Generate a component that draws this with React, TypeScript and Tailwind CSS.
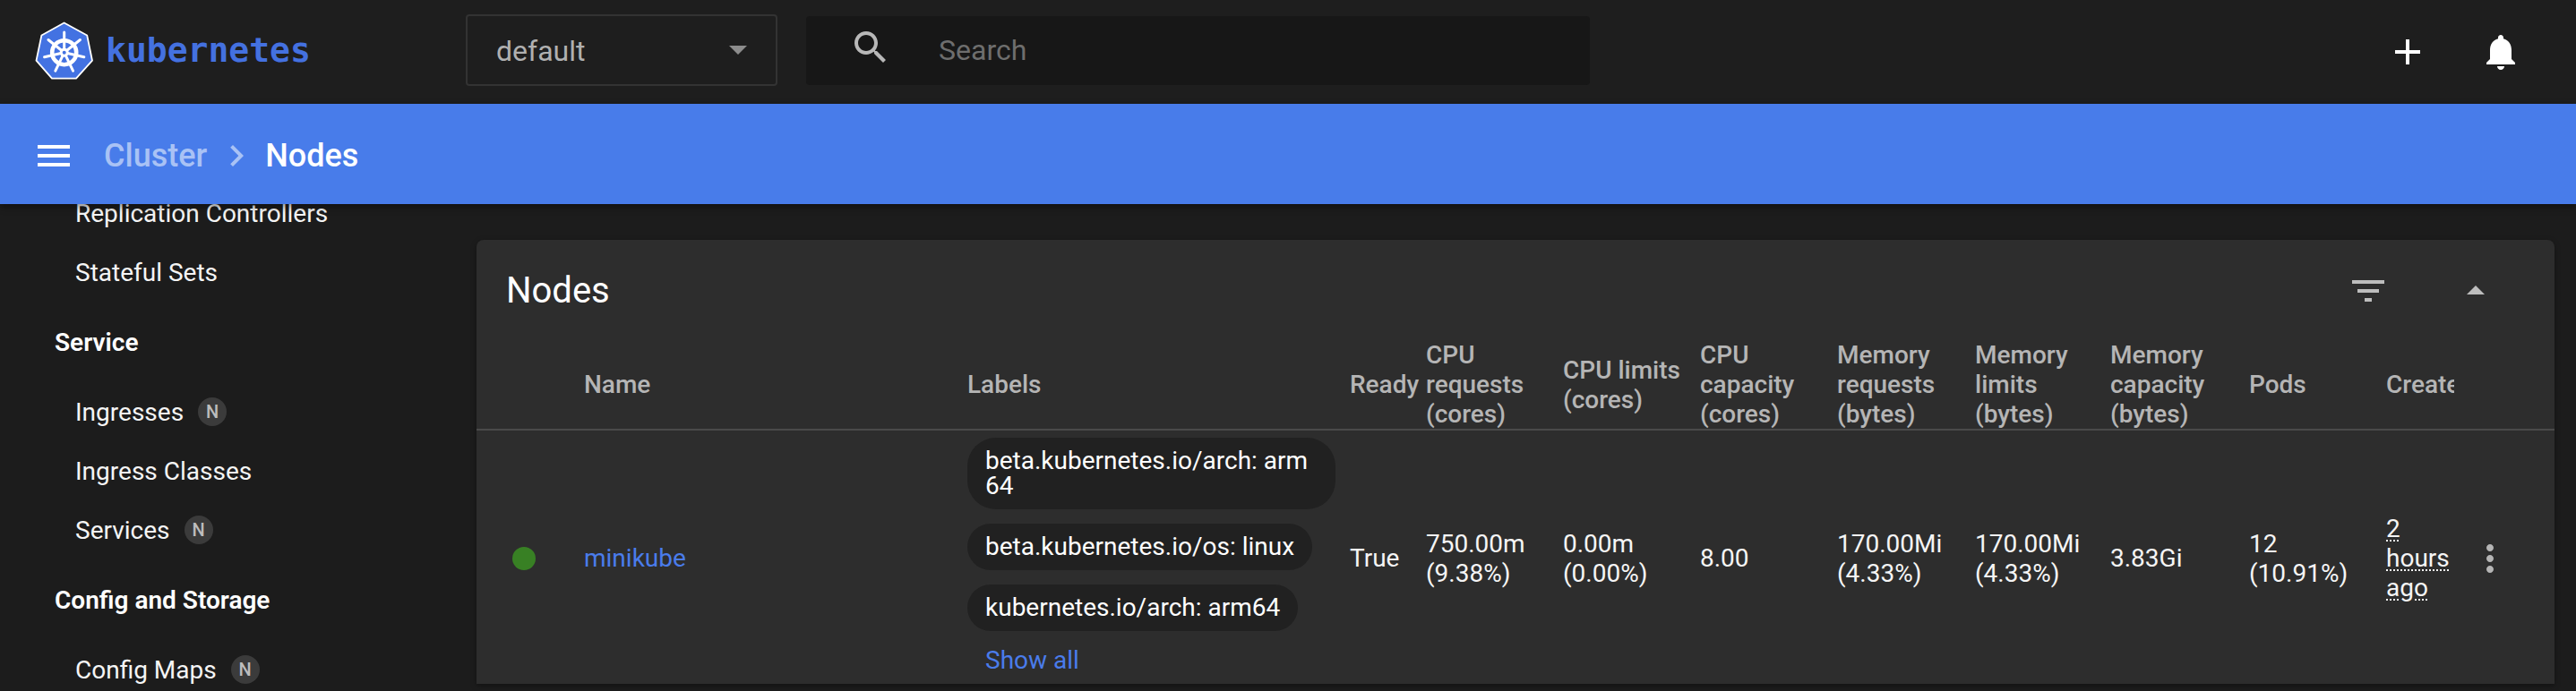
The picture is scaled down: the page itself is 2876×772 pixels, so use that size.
const GRID = "grid grid-cols-[120px_428px_427px_85px_153px_153px_153px_154px_151px_155px_153px_76px_1fr]";

function Icon({ d, className }: { d: string; className: string }) {
  return (
    <svg viewBox="0 0 24 24" className={className} fill="currentColor">
      <path d={d} />
    </svg>
  );
}

function Logo() {
  const spokes = [0, 51.43, 102.86, 154.29, 205.71, 257.14, 308.57];
  return (
    <svg width="65" height="65" viewBox="-1 -1 65 65" className="shrink-0">
      <path
        d="M31.6 0.5 L57.2 14.5 L63 42.7 L45 62.7 L18 62.7 L0.5 42.7 L6.4 14.5 Z"
        fill="#4372e2"
        stroke="#ffffff"
        strokeWidth="1.8"
        strokeLinejoin="round"
      />
      <g stroke="#ffffff" fill="none">
        <circle cx="31.7" cy="33.7" r="13.5" strokeWidth="4.6" />
        {spokes.map((a) => (
          <g key={a} transform={`rotate(${a} 31.7 33.7)`}>
            <line x1="31.7" y1="31" x2="31.7" y2="11" strokeWidth="3" strokeLinecap="round" />
          </g>
        ))}
      </g>
      <circle cx="31.7" cy="33.7" r="5" fill="#ffffff" />
      <circle cx="31.7" cy="33.7" r="2" fill="#4372e2" />
    </svg>
  );
}

function SideItem({ label, badge }: { label: string; badge?: boolean }) {
  return (
    <div className="h-[66px] pl-[84px] flex items-center gap-[16px] text-[#f5f5f5]">
      <span>{label}</span>
      {badge && (
        <span className="w-[32px] h-[32px] rounded-full bg-[#3b3b3b] text-[#bdbdbd] text-[20px] font-medium flex items-center justify-center">
          N
        </span>
      )}
    </div>
  );
}

function SideHead({ label }: { label: string }) {
  return <div className="h-[90px] pl-[61px] flex items-center font-semibold text-white">{label}</div>;
}

function Chip({ children }: { children: string }) {
  return (
    <div className="w-fit max-w-[411px] bg-[#212121] rounded-[32px] px-[20px] py-[12px] leading-[28px] break-all text-white">
      {children}
    </div>
  );
}

function Th({ children, className = "" }: { children: React.ReactNode; className?: string }) {
  return <div className={`self-center ${className}`}>{children}</div>;
}

function Td({ children, className = "" }: { children: React.ReactNode; className?: string }) {
  return <div className={`self-center ${className}`}>{children}</div>;
}

export default function App() {
  return (
    <div className="w-[2876px] h-[772px] flex flex-col overflow-hidden bg-[#1c1c1c] font-['Roboto',sans-serif] text-[28px] leading-[33px]">
      <header className="h-[116px] shrink-0 bg-[#1e1e1e] flex items-center pb-[4px] pr-[60px]">
        <div className="w-[520px] pl-[39px] flex items-center gap-[14px]">
          <Logo />
          <span className="font-['DejaVu_Sans_Mono',monospace] font-bold text-[38px] text-[#4471e0] leading-none">kubernetes</span>
        </div>
        <div className="w-[348px] h-[80px] border-2 border-[#333333] rounded-[4px] flex items-center justify-between pl-[32px] pr-[32px] text-[32px] text-[#b0b0b0]">
          <span className="pt-[2px]">default</span>
          <span className="w-0 h-0 border-x-[10px] border-x-transparent border-t-[10px] border-t-[#8c8c8c]" />
        </div>
        <div className="ml-[32px] w-[875px] h-[77px] bg-[#171717] rounded-[4px] flex items-center pl-[48px]">
          <Icon
            className="w-[48px] h-[48px] text-[#b8b8b8] -mt-[6px]"
            d="M15.5 14h-.79l-.28-.27C15.41 12.59 16 11.11 16 9.5 16 5.91 13.09 3 9.5 3S3 5.91 3 9.5 5.91 16 9.5 16c1.61 0 3.09-.59 4.23-1.57l.27.28v.79l5 4.99L20.49 19l-4.99-5zm-6 0C7.01 14 5 11.99 5 9.5S7.01 5 9.5 5 14 7.01 14 9.5 11.99 14 9.5 14z"
          />
          <span className="ml-[52px] text-[32px] text-[#6e6e6e]">Search</span>
        </div>
        <div className="ml-auto mt-[4px] flex items-center gap-[56px] text-white">
          <Icon className="w-[48px] h-[48px]" d="M19 13h-6v6h-2v-6H5v-2h6V5h2v6h6v2z" />
          <Icon
            className="w-[48px] h-[48px]"
            d="M12 22c1.1 0 2-.9 2-2h-4c0 1.1.89 2 2 2zm6-6v-5c0-3.07-1.64-5.64-4.5-6.32V4c0-.83-.67-1.5-1.5-1.5s-1.5.67-1.5 1.5v.68C7.63 5.36 6 7.92 6 11v5l-2 2v1h16v-1l-2-2z"
          />
        </div>
      </header>

      <div className="relative z-10 h-[112px] shrink-0 bg-[#487cea] shadow-[0_3px_8px_rgba(0,0,0,0.45)] flex items-center pl-[36px] pt-[4px] text-[36px] font-medium">
        <Icon className="w-[48px] h-[48px] text-white" d="M3 18h18v-2H3v2zm0-5h18v-2H3v2zm0-5h18V6H3v2z" />
        <span className="ml-[32px] text-[#a9c2f5]">Cluster</span>
        <Icon className="ml-[9px] w-[48px] h-[48px] text-[#a9c2f5]" d="M10 6L8.59 7.41 13.17 12l-4.58 4.59L10 18l6-6z" />
        <span className="ml-[8px] text-white">Nodes</span>
      </div>

      <div className="flex-1 min-h-0 flex overflow-hidden">
        <nav className="w-[532px] shrink-0 overflow-hidden">
          <div className="-mt-[23px]">
            <SideItem label="Replication Controllers" />
            <SideItem label="Stateful Sets" />
            <SideHead label="Service" />
            <SideItem label="Ingresses" badge />
            <SideItem label="Ingress Classes" />
            <SideItem label="Services" badge />
            <SideHead label="Config and Storage" />
            <SideItem label="Config Maps" badge />
          </div>
        </nav>

        <main className="flex-1 min-w-0 pt-[40px] pr-[24px]">
          <section className="h-[496px] bg-[#2d2d2d] rounded-t-[8px] shadow-[0_2px_6px_rgba(0,0,0,0.35)] overflow-hidden">
            <div className="h-[112px] relative">
              <h2 className="absolute left-[33px] top-[33px] text-[40px] leading-[48px] text-white font-normal">Nodes</h2>
              <Icon
                className="absolute left-[2088px] top-[33px] w-[48px] h-[48px] text-[#bdbdbd]"
                d="M10 18h4v-2h-4v2zM3 6v2h18V6H3zm3 7h12v-2H6v2z"
              />
              <Icon className="absolute left-[2208px] top-[33px] w-[48px] h-[48px] text-[#bdbdbd]" d="M7 14l5-5 5 5z" />
            </div>

            <div className={`${GRID} h-[101px] border-b-2 border-[#4a4a4a] font-medium text-[#b5b5b5]`}>
              <Th> </Th>
              <Th>Name</Th>
              <Th>Labels</Th>
              <Th>Ready</Th>
              <Th className="pr-[8px]">CPU requests (cores)</Th>
              <Th className="pr-[8px]">CPU limits (cores)</Th>
              <Th className="pr-[8px]">CPU capacity (cores)</Th>
              <Th className="pr-[24px]">Memory requests (bytes)</Th>
              <Th className="pr-[24px]">Memory limits (bytes)</Th>
              <Th className="pr-[24px]">Memory capacity (bytes)</Th>
              <Th>Pods</Th>
              <Th className="overflow-hidden whitespace-nowrap">Created</Th>
              <Th> </Th>
            </div>

            <div className={`${GRID} h-[283px] pt-[2px] text-[#f5f5f5]`}>
              <Td className="justify-self-center ml-[-14px]">
                <div className="w-[26px] h-[26px] rounded-full bg-[#388024]" />
              </Td>
              <Td className="text-[#4a7ceb]">minikube</Td>
              <Td className="flex flex-col gap-[16px] items-start self-start pt-[6px]">
                <Chip>beta.kubernetes.io/arch: arm64</Chip>
                <Chip>beta.kubernetes.io/os: linux</Chip>
                <Chip>kubernetes.io/arch: arm64</Chip>
                <span className="pl-[20px] text-[#4a7ceb]">Show all</span>
              </Td>
              <Td>True</Td>
              <Td className="pr-[8px]">750.00m (9.38%)</Td>
              <Td className="pr-[8px]">0.00m (0.00%)</Td>
              <Td>8.00</Td>
              <Td className="pr-[8px]">170.00Mi (4.33%)</Td>
              <Td className="pr-[8px]">170.00Mi (4.33%)</Td>
              <Td>3.83Gi</Td>
              <Td className="pr-[8px]">12 (10.91%)</Td>
              <Td className="underline decoration-dotted decoration-2 underline-offset-[3px]">2 hours ago</Td>
              <Td className="pl-[16px]">
                <Icon
                  className="w-[48px] h-[48px] text-[#b5b5b5]"
                  d="M12 8c1.1 0 2-.9 2-2s-.9-2-2-2-2 .9-2 2 .9 2 2 2zm0 2c-1.1 0-2 .9-2 2s.9 2 2 2 2-.9 2-2-.9-2-2-2zm0 6c-1.1 0-2 .9-2 2s.9 2 2 2 2-.9 2-2-.9-2-2-2z"
                />
              </Td>
            </div>
          </section>
        </main>
      </div>
    </div>
  );
}
